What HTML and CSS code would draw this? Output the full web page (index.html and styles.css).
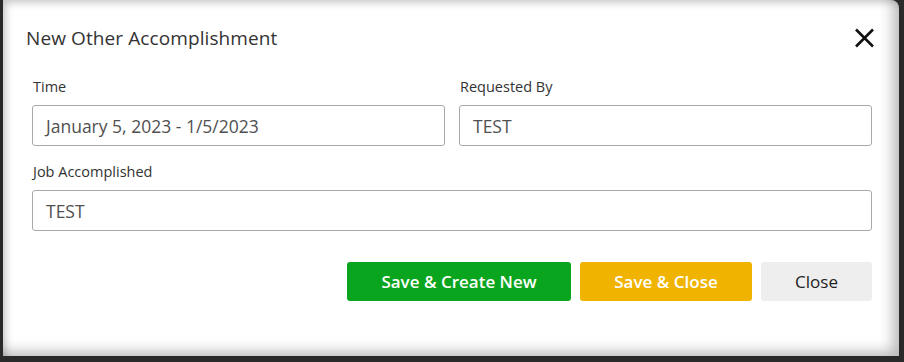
FILE: index.html
```html
<!DOCTYPE html>
<html>
<head>
<meta charset="utf-8">
<link rel="stylesheet" href="styles.css">
</head>
<body>
<div class="modal">
  <div class="header">
    <h1 class="title">New Other Accomplishment</h1>
    <button class="x-btn" aria-label="Close">
      <svg width="21" height="20" viewBox="0 0 21 20"><path d="M2 1.5 L19 18.5 M19 1.5 L2 18.5" stroke="#111" stroke-width="2.6" fill="none"/></svg>
    </button>
  </div>
  <div class="body">
    <div class="row two">
      <div class="field">
        <label class="label">Time</label>
        <div class="input">January 5, 2023 - 1/5/2023</div>
      </div>
      <div class="field">
        <label class="label">Requested By</label>
        <div class="input">TEST</div>
      </div>
    </div>
    <div class="row">
      <div class="field">
        <label class="label">Job Accomplished</label>
        <div class="input">TEST</div>
      </div>
    </div>
    <div class="actions">
      <button class="btn green">Save &amp; Create New</button>
      <button class="btn yellow">Save &amp; Close</button>
      <button class="btn grey">Close</button>
    </div>
  </div>
</div>
</body>
</html>
```
FILE: styles.css
```css
html, body {
  margin: 0;
  padding: 0;
}
body {
  background: #2a2a2a;
  width: 904px;
  height: 362px;
  overflow: hidden;
  font-family: "Open Sans", "Noto Sans", sans-serif;
}
.modal {
  margin-left: 3px;
  width: 896px;
  height: 356px;
  background: #fff;
  border-radius: 0 8px 0 0;
  box-shadow: inset -16px -14px 14px -10px rgba(0,0,0,0.28), inset 6px 6px 8px -4px rgba(0,0,0,0.25);
  box-sizing: border-box;
}
.header {
  display: flex;
  justify-content: space-between;
  align-items: flex-start;
  padding: 26px 24px 0 23px;
}
.title {
  margin: 0;
  font-size: 19px;
  font-weight: 400;
  line-height: 24px;
  color: #333;
  letter-spacing: 0.1px;
}
.x-btn {
  background: none;
  border: 0;
  padding: 0;
  margin-top: 2px;
  width: 21px;
  height: 20px;
  cursor: pointer;
}
.x-btn svg { display: block; }
.body {
  padding: 0 27px 0 29px;
}
.row {
  display: flex;
  gap: 14px;
}
.field {
  flex: 1;
  display: flex;
  flex-direction: column;
}
.label {
  font-size: 14.5px;
  line-height: 20px;
  color: #333;
  padding-left: 1px;
  margin-top: 27px;
  margin-bottom: 8px;
}
.row + .row .label { margin-top: 16px; margin-bottom: 8px; }
.input {
  height: 41px;
  box-sizing: border-box;
  border: 1px solid #a9a9a9;
  border-radius: 3px;
  padding: 0 13px;
  display: flex;
  align-items: center;
  font-size: 17.5px;
  color: #505050;
}
.actions {
  display: flex;
  justify-content: flex-end;
  gap: 9px;
  margin-top: 31px;
}
.btn {
  height: 39px;
  border: 0;
  border-radius: 3px;
  font-family: "Open Sans", "Noto Sans", sans-serif;
  font-size: 17px;
  padding: 0;
}
.btn.green { width: 224px; background: #0aa51e; color: #fff; font-weight: 600; }
.btn.yellow { width: 172px; background: #f0b400; color: #fff; font-weight: 600; }
.btn.grey { width: 111px; background: #eeeeee; color: #222; }
```
